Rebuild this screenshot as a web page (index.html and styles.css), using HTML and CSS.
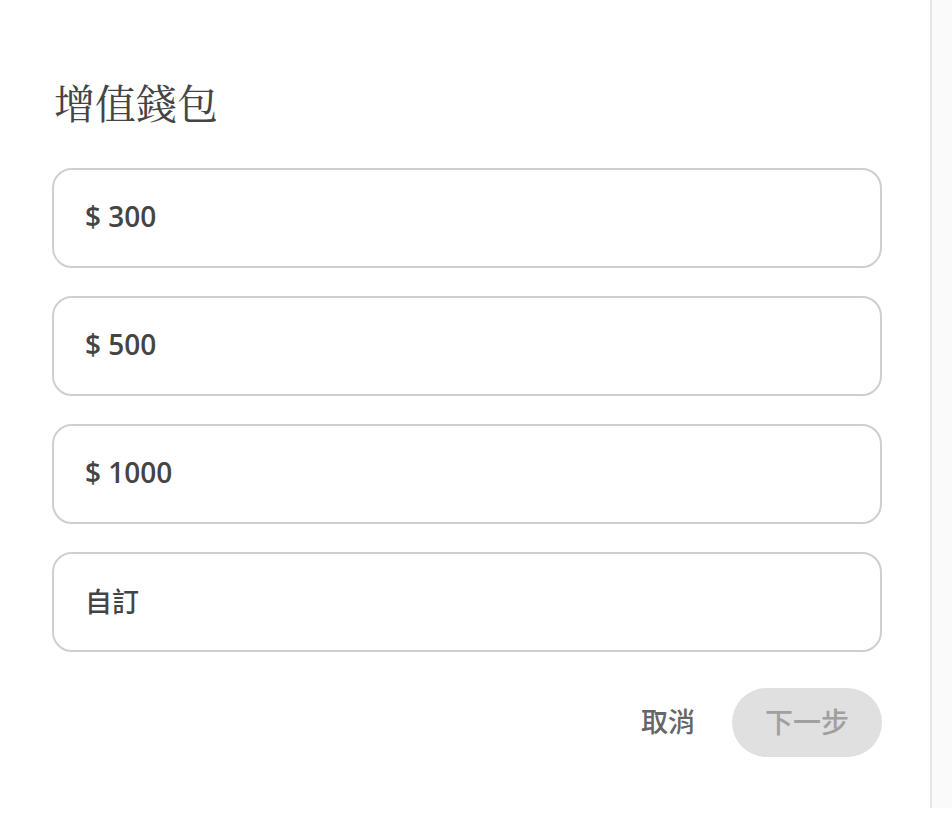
FILE: index.html
```html
<!DOCTYPE html>
<html lang="zh-Hant">
<head>
<meta charset="utf-8">
<title>增值錢包</title>
<link rel="stylesheet" href="styles.css">
</head>
<body>
<div class="page">
  <main class="dialog">
    <h1 class="title">增值錢包</h1>
    <div class="options">
      <div class="option">$ 300</div>
      <div class="option">$ 500</div>
      <div class="option">$ 1000</div>
      <div class="option option-cjk">自訂</div>
    </div>
    <div class="actions">
      <button class="btn-cancel">取消</button>
      <button class="btn-next" disabled>下一步</button>
    </div>
  </main>
  <div class="rail"></div>
</div>
</body>
</html>
```

FILE: styles.css
```css
html, body {
  margin: 0;
  padding: 0;
  background: #ffffff;
}
.page {
  display: flex;
  height: 808px;
}
.dialog {
  width: 930px;
  box-sizing: border-box;
  padding: 77px 48px 0 52px;
}
.rail {
  flex: 1;
  background: #fafafa;
  border-left: 2px solid #e6e6e6;
}
.title {
  margin: 0 0 42px 2px;
  font-family: "Noto Serif CJK TC", "Noto Serif TC", "AR PL UMing TW", "Liberation Serif", serif;
  font-weight: normal;
  font-size: 41px;
  line-height: 1.2;
  color: #444444;
}
.options {
  display: flex;
  flex-direction: column;
  gap: 28px;
}
.option {
  height: 100px;
  box-sizing: border-box;
  border: 2px solid #cfcfcf;
  border-radius: 20px;
  display: flex;
  align-items: center;
  padding: 0 0 4px 31px;
  font-family: "Open Sans", "Noto Sans CJK TC", sans-serif;
  font-weight: 600;
  font-size: 28px;
  color: #444444;
}
.option-cjk {
  font-family: "Noto Sans CJK TC", sans-serif;
  font-weight: 500;
  font-size: 27px;
}
.actions {
  display: flex;
  justify-content: flex-end;
  align-items: center;
  gap: 37px;
  margin-top: 36px;
}
.btn-cancel {
  border: none;
  background: none;
  padding: 0 0 4px 0;
  font-family: "Noto Sans CJK TC", sans-serif;
  font-weight: 500;
  font-size: 27px;
  color: #666666;
}
.btn-next {
  border: none;
  height: 69px;
  padding: 0 33px 4px;
  border-radius: 35px;
  background: #e0e0e0;
  font-family: "Noto Sans CJK TC", sans-serif;
  font-weight: 500;
  font-size: 28px;
  color: #a0a0a0;
}
```
